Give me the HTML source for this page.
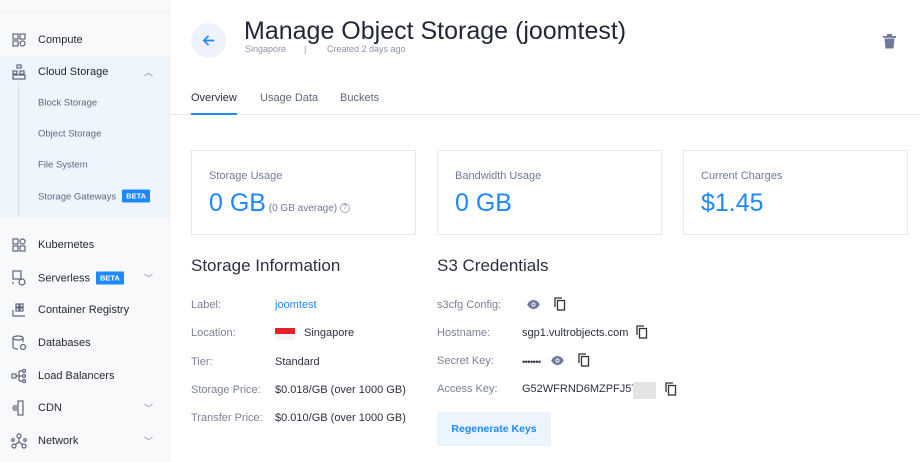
<!DOCTYPE html>
<html><head><meta charset="utf-8"><style>
*{margin:0;padding:0;box-sizing:border-box}
body{width:920px;height:462px;overflow:hidden;background:#fff;font-family:"Liberation Sans",Arial,sans-serif;position:relative;color:#2a3040}
.a{position:absolute;white-space:nowrap}
#sb{position:absolute;left:0;top:0;width:170px;height:462px;background:#f8f9fb;border-right:1px solid #eceef2}
.ni{position:absolute;left:38px;font-size:11px;color:#1f2533;transform:translateY(-50%)}
.si{position:absolute;left:38px;font-size:9.5px;color:#5c667a;transform:translateY(-50%)}
.ic{position:absolute;left:11px;width:16px;height:16px;transform:translateY(-50%)}
.chev{position:absolute;left:144px;font-size:9px;color:#7a8499;transform:translateY(-50%)}
.beta{display:inline-block;background:#1e88ff;color:#fff;font-size:7.5px;font-weight:bold;padding:2px 4px;margin-left:6px;border-radius:1px;vertical-align:1px}
.card{position:absolute;top:150px;width:225px;height:85px;border:1px solid #e4e7ec}
.cl{position:absolute;left:17px;top:19px;font-size:11px;color:#6e7a96}
.cv{position:absolute;left:17px;top:38px;font-size:25px;color:#1e88ff}
.lb{font-size:11px;color:#7a8294}
.vl{font-size:11px;color:#2a3040}
</style></head><body>
<div id="sb">
<div class="a" style="left:0;top:11px;width:169px;height:1px;background:#eceef2"></div>
<div class="a" style="left:0;top:56px;width:169px;height:162px;background:#eef5fd"></div>
<div class="a" style="left:18px;top:82px;width:1px;height:134px;background:#d8dde6"></div>
<svg class="ic" style="top:40px" viewBox="0 0 16 16" fill="none" stroke="#5c667a" stroke-width="1.2"><rect x="2" y="2" width="5" height="5"/><rect x="9" y="2" width="5" height="5"/><rect x="2" y="9" width="5" height="5"/><circle cx="11.5" cy="11.5" r="2.5"/></svg>
<div class="ni" style="top:40px">Compute</div>
<svg class="ic" style="top:72px" viewBox="0 0 16 16" fill="none" stroke="#5c667a" stroke-width="1.2"><rect x="6" y="1" width="4" height="3"/><rect x="2" y="7" width="4" height="3"/><rect x="9" y="7" width="4" height="3"/><rect x="2" y="11" width="12" height="4"/></svg>
<div class="ni" style="top:72px">Cloud Storage</div><div class="chev" style="top:72px">︿</div>
<div class="si" style="top:103px">Block Storage</div>
<div class="si" style="top:134px">Object Storage</div>
<div class="si" style="top:165px">File System</div>
<div class="si" style="top:196px">Storage Gateways<span class="beta">BETA</span></div>
<svg class="ic" style="top:245px" viewBox="0 0 16 16" fill="none" stroke="#5c667a" stroke-width="1.2"><rect x="2" y="2" width="5" height="5"/><circle cx="11.5" cy="4.5" r="2.5"/><rect x="2" y="9" width="5" height="5"/><rect x="9" y="9" width="5" height="5"/></svg>
<div class="ni" style="top:245px">Kubernetes</div>
<svg class="ic" style="top:278px" viewBox="0 0 16 16" fill="none" stroke="#5c667a" stroke-width="1.2"><rect x="2" y="1" width="8" height="8"/><circle cx="11" cy="12" r="3"/><path d="M2 12v2"/></svg>
<div class="ni" style="top:278px">Serverless<span class="beta">BETA</span></div><div class="chev" style="top:278px">﹀</div>
<svg class="ic" style="top:310px" viewBox="0 0 16 16" fill="none" stroke="#5c667a" stroke-width="1.2"><rect x="5" y="2" width="3" height="3"/><rect x="9" y="2" width="3" height="3"/><rect x="5" y="6" width="3" height="3"/><rect x="9" y="6" width="3" height="3"/><path d="M2 8v6h12"/></svg>
<div class="ni" style="top:310px">Container Registry</div>
<svg class="ic" style="top:343px" viewBox="0 0 16 16" fill="none" stroke="#5c667a" stroke-width="1.2"><ellipse cx="7" cy="3" rx="5" ry="2"/><path d="M2 3v9c0 1 2 2 5 2M12 3v4"/><circle cx="12" cy="12" r="2.5"/></svg>
<div class="ni" style="top:343px">Databases</div>
<svg class="ic" style="top:376px" viewBox="0 0 16 16" fill="none" stroke="#5c667a" stroke-width="1.2"><rect x="1" y="6" width="4" height="4"/><path d="M5 8h3M8 3v10M8 3h3M8 8h3M8 13h3"/><circle cx="13" cy="3" r="1.5"/><circle cx="13" cy="8" r="1.5"/><circle cx="13" cy="13" r="1.5"/></svg>
<div class="ni" style="top:376px">Load Balancers</div>
<svg class="ic" style="top:408px" viewBox="0 0 16 16" fill="none" stroke="#5c667a" stroke-width="1.2"><rect x="7" y="1" width="5" height="14"/><path d="M2 6h4M1 8h5M2 10h4"/></svg>
<div class="ni" style="top:408px">CDN</div><div class="chev" style="top:408px">﹀</div>
<svg class="ic" style="top:441px" viewBox="0 0 16 16" fill="none" stroke="#5c667a" stroke-width="1.2"><circle cx="8" cy="3" r="2"/><circle cx="3" cy="13" r="2"/><circle cx="13" cy="13" r="2"/><circle cx="2" cy="7" r="1.3"/><circle cx="14" cy="7" r="1.3"/><path d="M8 5v4M8 9l-4 3M8 9l4 3"/></svg>
<div class="ni" style="top:441px">Network</div><div class="chev" style="top:441px">﹀</div>
</div>

<div class="a" style="left:191px;top:23px;width:35px;height:35px;border-radius:50%;background:#edf2fc"></div>
<svg class="a" style="left:201px;top:33px" width="15" height="15" viewBox="0 0 16 16" fill="none" stroke="#1e88ff" stroke-width="1.8"><path d="M14 8H3M8 3L3 8l5 5"/></svg>
<div class="a" style="left:244px;top:17px;font-size:25px;color:#222836">Manage Object Storage (joomtest)</div>
<div class="a" style="left:245px;top:44px;font-size:9px;color:#8a93a6">Singapore</div>
<div class="a" style="left:304px;top:44px;font-size:9px;color:#8a93a6">|</div>
<div class="a" style="left:327px;top:44px;font-size:9px;color:#8a93a6">Created 2 days ago</div>
<svg class="a" style="left:883px;top:34px" width="13" height="15" viewBox="0 0 13 15" fill="#6d7a99"><rect x="0" y="2" width="13" height="1.8"/><rect x="4" y="0" width="5" height="2"/><path d="M1.5 4.5h10l-1 10h-8z"/></svg>

<div class="a" style="left:191px;top:92px;font-size:11px;color:#2a3040">Overview</div>
<div class="a" style="left:260px;top:92px;font-size:11px;color:#5c667a">Usage Data</div>
<div class="a" style="left:340px;top:92px;font-size:11px;color:#5c667a">Buckets</div>
<div class="a" style="left:170px;top:114px;width:750px;height:1px;background:#e6e9ee"></div>
<div class="a" style="left:191px;top:113px;width:46px;height:2px;background:#1e88ff"></div>

<div class="card" style="left:191px"><div class="cl">Storage Usage</div><div class="cv">0 GB<span style="font-size:10px;color:#6e7a96"> (0 GB average) <span style="display:inline-block;width:10px;height:10px;border:1px solid #aab;border-radius:50%;font-size:7px;text-align:center;line-height:8px;vertical-align:2px">?</span></span></div></div>
<div class="card" style="left:437px"><div class="cl">Bandwidth Usage</div><div class="cv">0 GB</div></div>
<div class="card" style="left:683px"><div class="cl">Current Charges</div><div class="cv">$1.45</div></div>

<div class="a" style="left:191px;top:256px;font-size:17px;color:#2a3040">Storage Information</div>
<div class="a lb" style="left:191px;top:299px">Label:</div><div class="a" style="left:275px;top:299px;font-size:11px;color:#1e88ff">joomtest</div>
<div class="a lb" style="left:191px;top:327px">Location:</div>
<div class="a" style="left:275px;top:328px;width:20px;height:6px;background:#e8202a"></div><div class="a" style="left:275px;top:334px;width:20px;height:6px;background:#f4f4f4"></div>
<div class="a vl" style="left:304px;top:327px">Singapore</div>
<div class="a lb" style="left:191px;top:356px">Tier:</div><div class="a vl" style="left:275px;top:356px">Standard</div>
<div class="a lb" style="left:191px;top:384px">Storage Price:</div><div class="a vl" style="left:275px;top:384px">$0.018/GB (over 1000 GB)</div>
<div class="a lb" style="left:191px;top:412px">Transfer Price:</div><div class="a vl" style="left:275px;top:412px">$0.010/GB (over 1000 GB)</div>

<div class="a" style="left:437px;top:256px;font-size:17px;color:#2a3040">S3 Credentials</div>
<div class="a lb" style="left:437px;top:299px">s3cfg Config:</div>
<div class="a lb" style="left:437px;top:327px">Hostname:</div><div class="a vl" style="left:522px;top:327px">sgp1.vultrobjects.com</div>
<div class="a lb" style="left:437px;top:355px">Secret Key:</div><div class="a vl" style="left:522px;top:357px;font-size:9px;letter-spacing:-0.5px">•••••••</div>
<div class="a lb" style="left:437px;top:383px">Access Key:</div><div class="a vl" style="left:522px;top:383px">G52WFRND6MZPFJ5TN</div>
<div class="a" style="left:633px;top:382px;width:23px;height:17px;background:#e4e4e4"></div>
<svg width="0" height="0" style="position:absolute"><defs>
<symbol id="eye" viewBox="0 0 14 10"><path d="M0 5C2 1 5 0 7 0s5 1 7 5c-2 4-5 5-7 5S2 9 0 5z" fill="#6d7a99"/><circle cx="7" cy="5" r="2.3" fill="#fff"/><circle cx="7" cy="5" r="1.3" fill="#6d7a99"/></symbol>
<symbol id="cp" viewBox="0 0 12 14"><path d="M1 10V1h7" fill="none" stroke="#333" stroke-width="1.3"/><rect x="3.5" y="3.5" width="7" height="9.5" fill="none" stroke="#333" stroke-width="1.3"/></symbol></defs></svg>
<svg class="a" style="left:527px;top:300px" width="13" height="9"><use href="#eye"/></svg>
<svg class="a" style="left:554px;top:297px" width="12" height="14"><use href="#cp"/></svg>
<svg class="a" style="left:636px;top:325px" width="12" height="14"><use href="#cp"/></svg>
<svg class="a" style="left:551px;top:356px" width="13" height="9"><use href="#eye"/></svg>
<svg class="a" style="left:578px;top:353px" width="12" height="14"><use href="#cp"/></svg>
<svg class="a" style="left:665px;top:382px" width="12" height="14"><use href="#cp"/></svg>
<div class="a" style="left:437px;top:412px;width:114px;height:34px;background:#ebf4ff;color:#1e88ff;font-size:10.5px;font-weight:bold;text-align:center;line-height:34px">Regenerate Keys</div>
</body></html>
